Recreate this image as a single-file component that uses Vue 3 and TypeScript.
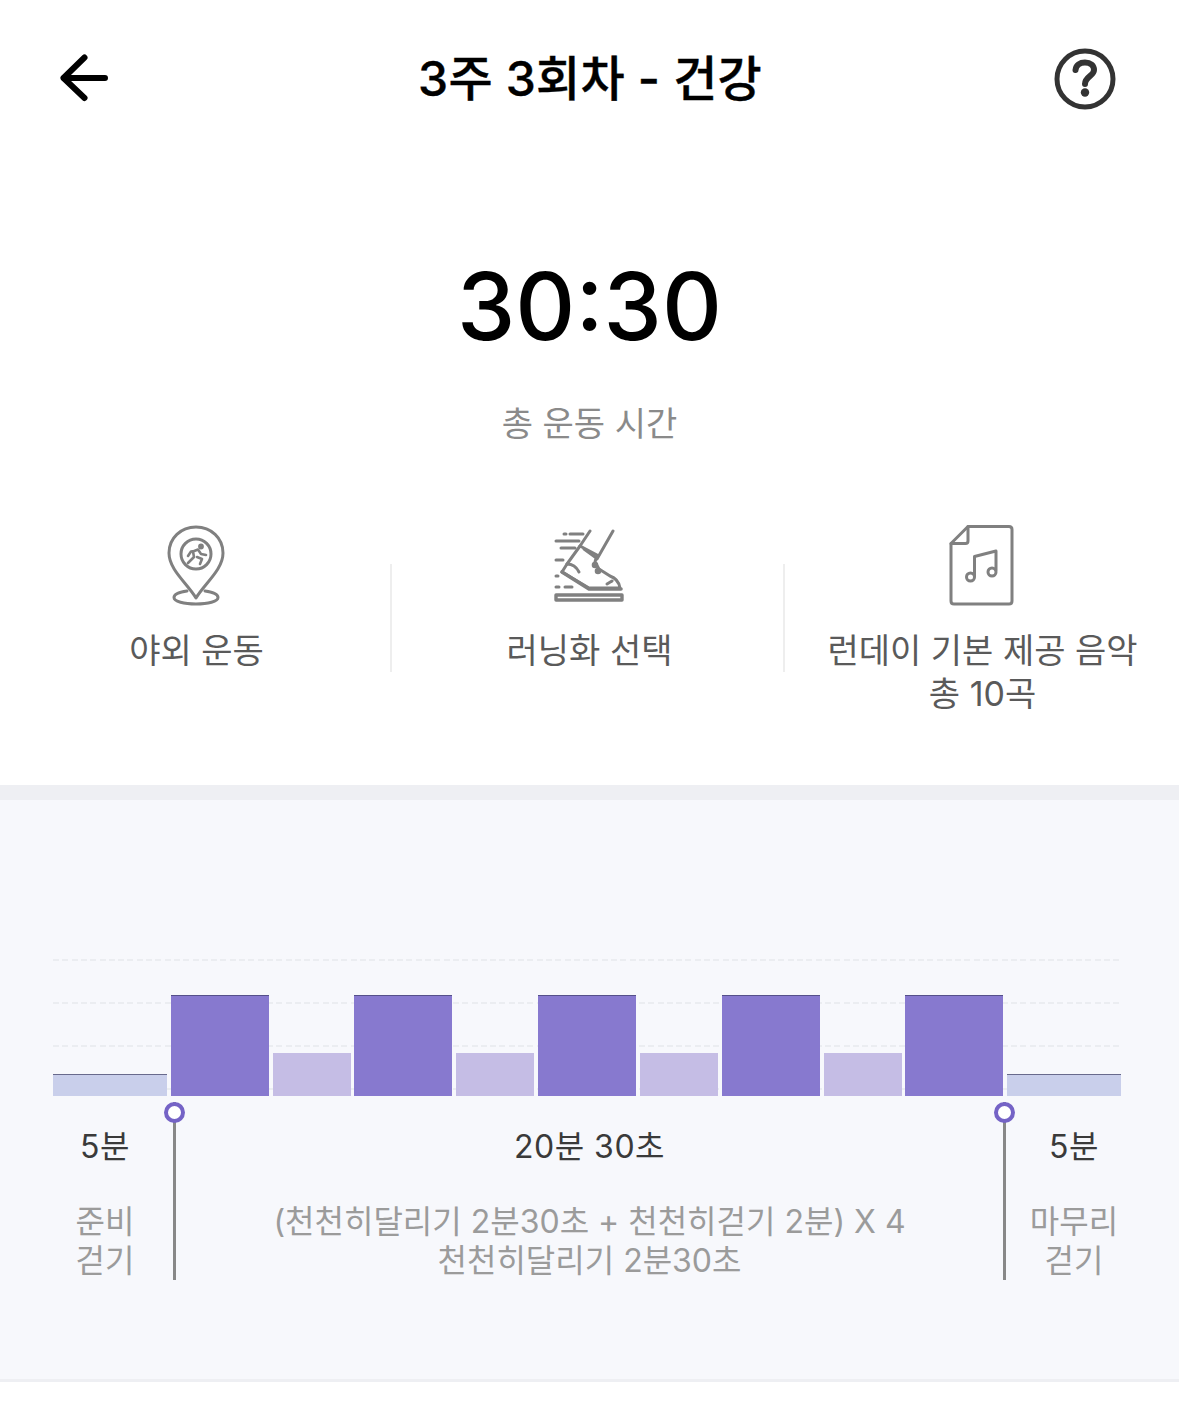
<script setup lang="ts">
interface Bar { w: number; h: number; kind: string }
const bars: Bar[] = [
  { w: 114, h: 22, kind: 'warm' },
  { w: 98, h: 101, kind: 'run' },
  { w: 78, h: 43, kind: 'walk' },
  { w: 98, h: 101, kind: 'run' },
  { w: 78, h: 43, kind: 'walk' },
  { w: 98, h: 101, kind: 'run' },
  { w: 78, h: 43, kind: 'walk' },
  { w: 98, h: 101, kind: 'run' },
  { w: 78, h: 43, kind: 'walk' },
  { w: 98, h: 101, kind: 'run' },
  { w: 114, h: 22, kind: 'warm' },
]
const grid = [0, 1, 2, 3]
</script>

<template>
  <div class="page">
    <header class="top">
      <svg class="back" width="90" height="90" viewBox="0 0 90 90" fill="none" stroke="#000" stroke-width="6" stroke-linecap="round" stroke-linejoin="round">
        <path d="M44.500 27.500 23.500 48 44.500 68M23.500 48H65" />
      </svg>
      <h1 class="title">3주 3회차 - 건강</h1>
      <svg class="help" width="90" height="90" viewBox="0 0 90 90" fill="none" stroke="#333" stroke-linecap="round">
        <circle cx="45" cy="44" r="28" stroke-width="5" />
        <path d="M35.500 35C36 30 40 27.500 45 27.500C50.500 27.500 54 30.500 54 35C54 41 45 41.500 45 49" stroke-width="6" />
        <circle cx="45" cy="57.500" r="4.200" fill="#333" stroke="none" />
      </svg>
    </header>

    <section class="total">
      <div class="time">30:30</div>
      <div class="caption">총 운동 시간</div>
    </section>

    <section class="info">
      <div class="cell">
        <svg class="ico pin" width="120" height="110" viewBox="0 0 120 110" fill="none" stroke="#808080" stroke-width="3" stroke-linecap="round" stroke-linejoin="round">
          <path d="M56 88C48 74 29 60 29 43C29 28 41 17 56 17C71 17 83 28 83 43C83 60 64 74 56 88Z" />
          <path d="M47 81C39 82 34 84.500 34 87.500C34 91.500 44 94 56 94C68 94 78 91.500 78 87.500C78 84.500 73 82 65 81" />
          <circle cx="56" cy="44" r="15" />
          <g stroke-width="2.600">
            <circle cx="61" cy="36.500" r="1.600" fill="#808080" />
            <path d="M48 53 54 47 53 41.500 58 39.500 61 44 66 45M57 47 62 49 60 54M48 46 51 41.500 54 41" />
          </g>
        </svg>
        <p class="label">야외 운동</p>
      </div>
      <div class="cell">
        <svg class="ico shoe" width="120" height="110" viewBox="0 0 120 110" fill="none" stroke="#808080" stroke-width="3" stroke-linecap="round" stroke-linejoin="round">
          <path d="M59 21 49 36 36 54M82 21 66 49" />
          <path d="M49 36 66 45 64 52 68 59 79 66C85 68 88 72 89 78H58L31 62 36 54C42 54 46 58 48 62" />
          <path d="M31 62 58 79H90" stroke-width="3.600" />
          <path d="M53 39 64 47" />
          <circle cx="64" cy="55" r="1.800" fill="#808080" />
          <circle cx="67" cy="61" r="1.800" fill="#808080" />
          <path d="M81 71 76 74" />
          <rect x="25" y="85" width="66" height="5" stroke-width="3.400" />
          <path d="M33 24H35M39 24H52M25 31H48M30 38H44M25 50H32M25 66H27M25 77H28M34 77H41" />
        </svg>
        <p class="label">러닝화 선택</p>
      </div>
      <div class="cell">
        <svg class="ico doc" width="120" height="110" viewBox="0 0 120 110" fill="none" stroke="#808080" stroke-width="3" stroke-linecap="round" stroke-linejoin="round">
          <path d="M44 16.500H85C87 16.500 88 17.500 88 19.500V91C88 93 87 94 85 94H30C28 94 27 93 27 91V33.500Z" />
          <path d="M44 16.500V31C44 32.500 43 33.500 41.500 33.500H27" />
          <path d="M50.500 66V46.500L72 41V60" />
          <circle cx="46.500" cy="67" r="4" />
          <circle cx="68" cy="62" r="4" />
        </svg>
        <p class="label">런데이 기본 제공 음악<br />총 10곡</p>
      </div>
    </section>

    <section class="panel">
      <div class="chart">
        <div class="grid">
          <div v-for="g in grid" :key="g" class="gridline"></div>
        </div>
        <div class="bars">
          <div
            v-for="(b, i) in bars"
            :key="i"
            class="bar"
            :class="b.kind"
            :style="{ width: b.w + 'px', height: b.h + 'px' }"
          ></div>
        </div>
      </div>

      <div class="legend">
        <span class="marker left"></span>
        <span class="marker right"></span>
        <div class="col side">
          <div class="dur">5분</div>
          <div class="desc">준비<br />걷기</div>
        </div>
        <div class="col mid">
          <div class="dur">20분 30초</div>
          <div class="desc">(천천히달리기 2분30초 + 천천히걷기 2분) X 4<br />천천히달리기 2분30초</div>
        </div>
        <div class="col side">
          <div class="dur">5분</div>
          <div class="desc">마무리<br />걷기</div>
        </div>
      </div>
    </section>
    <div class="footer"></div>
  </div>
</template>

<style scoped>
.page {
  width: 1179px;
  height: 1403px;
  overflow: hidden;
  background: #fff;
  font-family: "Inter", "Noto Sans CJK KR", sans-serif;
  display: flex;
  flex-direction: column;
}
.top {
  height: 157px;
  display: flex;
  align-items: flex-start;
  justify-content: space-between;
  padding: 30px 49px 0 40px;
  box-sizing: border-box;
}
.help { margin-top: 5px; }
.title {
  margin: 1px 0 0 10px;
  font-size: 48px;
  font-weight: 500;
  line-height: 96px;
  color: #000;
  white-space: nowrap;
  letter-spacing: 0.2px;
  -webkit-text-stroke: 0.4px #000;
}
.total {
  height: 353px;
  display: flex;
  flex-direction: column;
  align-items: center;
}
.time {
  margin-top: 86px;
  font-size: 93px;
  line-height: 126px;
  font-weight: 500;
  color: #000;
}
.caption {
  margin-top: 33px;
  font-size: 34px;
  line-height: 44px;
  color: #8a8a8a;
}
.info {
  height: 275px;
  display: grid;
  grid-template-columns: repeat(3, 393px);
}
.cell {
  position: relative;
  display: flex;
  flex-direction: column;
  align-items: center;
}
.cell:not(:last-child)::after {
  content: "";
  position: absolute;
  right: 1px;
  top: 54px;
  height: 108px;
  width: 2px;
  background: #eeeeee;
}
.ico { display: block; filter: blur(0.4px); transform: translateX(2px); }
.pin { transform: translateX(3px); }
.shoe { transform: translateX(1px); }
.doc { transform: translateX(1px); }
.label {
  margin: 9px 0 0;
  font-size: 34px;
  line-height: 43px;
  color: #5a5a5a;
  text-align: center;
  white-space: nowrap;
  letter-spacing: 0;
}
.panel {
  flex: none;
  box-sizing: border-box;
  background: #f7f8fc;
  border-top: 15px solid #eeeff3;
  height: 594px;
  padding: 159px 58px 0 53px;
}
.chart {
  position: relative;
  height: 137px;
}
.grid {
  position: absolute;
  left: 0;
  right: 0;
  top: 0;
  display: flex;
  flex-direction: column;
  gap: 41px;
}
.gridline {
  height: 2px;
  width: 1067px;
  background: repeating-linear-gradient(to right, #ebedf1 0 6px, transparent 6px 9.300px);
}
.bars {
  position: absolute;
  left: 0;
  bottom: 0;
  width: 1069px;
  display: flex;
  align-items: flex-end;
  gap: 3.820px;
}
.bar { flex: none; box-sizing: border-box; }
.warm { background: #c9cfeb; border-top: 1px solid #686a8c; }
.run { background: #8779cf; border-top: 1px solid #55508a; }
.walk { background: #c5bde5; }
.legend {
  position: relative;
  display: flex;
  height: 184px;
  margin-left: -53px;
  margin-right: -58px;
  text-align: center;
}
.marker {
  position: absolute;
  top: 6px;
  width: 3px;
  height: 178px;
  background: #888;
}
.marker::before {
  content: "";
  position: absolute;
  left: -9px;
  top: 0;
  width: 21px;
  height: 21px;
  box-sizing: border-box;
  border: 4px solid #7563c6;
  border-radius: 50%;
  background: #fff;
}
.marker.left { left: 173px; }
.marker.right { left: 1003px; }
.side { width: 210px; }
.mid { flex: 1; }
.dur {
  margin-top: 31px;
  font-size: 32px;
  line-height: 40px;
  color: #3a3a3a;
  letter-spacing: 0.5px;
}
.desc {
  margin-top: 35px;
  font-size: 32px;
  line-height: 39px;
  color: #9b9b9b;
  white-space: nowrap;
}
.footer {
  height: 3px;
  background: #eeeff3;
}
</style>

<style>
html, body { margin: 0; background: #fff; }
</style>
